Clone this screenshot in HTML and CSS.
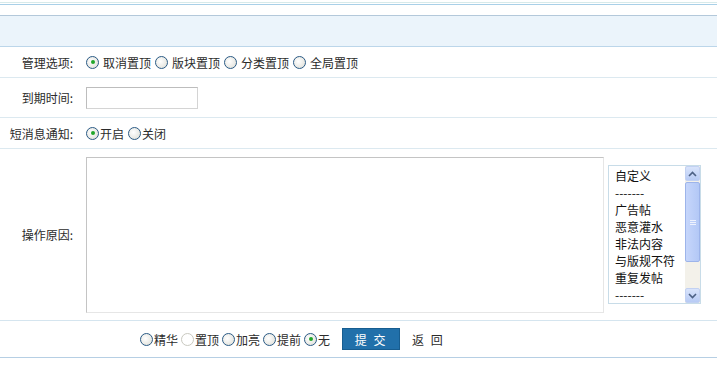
FILE: index.html
```html
<!DOCTYPE html>
<html lang="zh-CN">
<head>
    <meta charset="UTF-8" />
    <title>管理选项</title>
    <link rel="stylesheet" href="styles.css">
</head>
<body>
    <div class="topbar"></div>
    <div class="header"></div>

    <div class="row r1">
        <div class="label">管理选项:</div>
        <div class="field">
            <span class="opt"><i class="radio on"></i>取消置顶</span>
            <span class="opt"><i class="radio"></i>版块置顶</span>
            <span class="opt"><i class="radio"></i>分类置顶</span>
            <span class="opt"><i class="radio"></i>全局置顶</span>
        </div>
    </div>

    <div class="row r2">
        <div class="label">到期时间:</div>
        <div class="field"><input class="txt" type="text"></div>
    </div>

    <div class="row r3">
        <div class="label">短消息通知:</div>
        <div class="field tight">
            <span class="opt"><i class="radio on"></i>开启</span>
            <span class="opt"><i class="radio"></i>关闭</span>
        </div>
    </div>

    <div class="row r4">
        <div class="label">操作原因:</div>
        <div class="field">
            <textarea class="reason"></textarea>
            <div class="listbox">
                <ul>
                    <li>自定义</li>
                    <li>-------</li>
                    <li>广告帖</li>
                    <li>恶意灌水</li>
                    <li>非法内容</li>
                    <li>与版规不符</li>
                    <li>重复发帖</li>
                    <li>-------</li>
                </ul>
                <div class="scroll">
                    <div class="sbtn up"><svg width="9" height="6" viewBox="0 0 9 6"><path d="M1 5 L4.5 1.5 L8 5" fill="none" stroke="#4d6185" stroke-width="1.6"/></svg></div>
                    <div class="thumb"><span></span><span></span><span></span></div>
                    <div class="track"></div>
                    <div class="sbtn down"><svg width="9" height="6" viewBox="0 0 9 6"><path d="M1 1 L4.5 4.5 L8 1" fill="none" stroke="#4d6185" stroke-width="1.6"/></svg></div>
                </div>
            </div>
        </div>
    </div>

    <div class="row r5">
        <div class="field tight">
            <span class="opt"><i class="radio"></i>精华</span>
            <span class="opt"><i class="radio off"></i>置顶</span>
            <span class="opt"><i class="radio"></i>加亮</span>
            <span class="opt"><i class="radio"></i>提前</span>
            <span class="opt"><i class="radio on"></i>无</span>
            <button class="submit">提 交</button>
            <span class="back">返 回</span>
        </div>
    </div>
</body>
</html>
```

FILE: styles.css
```css
html,
body {
    margin: 0;
    padding: 0;
    background: #fff;
    font-family: "Noto Sans CJK SC", "Liberation Sans", sans-serif;
    font-size: 12px;
    color: #2b2b2b;
}
.topbar {
    margin-top: 2px;
    height: 1px;
    border-top: 1px solid #d7eaea;
    border-bottom: 1px solid #a9d0e8;
}
.header {
    margin-top: 10px;
    height: 30px;
    background: #ebf4fb;
    border-top: 1px solid #b3c8da;
    border-bottom: 1px solid #bcd6ea;
}
.row {
    display: flex;
    align-items: center;
    border-bottom: 1px solid #dce9f0;
}
.r1 { height: 30px; }
.r2 { height: 39px; }
.r3 { height: 30px; }
.r4 { height: 171px; border-bottom-color: #d5e5ef; }
.r5 { height: 36px; border-bottom-color: #b6cfe4; }
.label {
    width: 73px;
    text-align: right;
    padding-right: 13px;
    white-space: nowrap;
}
.field {
    display: flex;
    align-items: center;
}
.opt {
    display: flex;
    align-items: center;
    margin-right: 4px;
    white-space: nowrap;
}
.opt .radio { margin-right: 4px; }
.tight .opt .radio { margin-right: 1px; }
.radio {
    display: inline-block;
    box-sizing: border-box;
    width: 13px;
    height: 13px;
    border-radius: 50%;
    border: 1px solid #2a5a85;
    background: radial-gradient(circle at 40% 40%, #fff, #dcdcd4);
    position: relative;
}
.radio.on::after {
    content: '';
    position: absolute;
    left: 3.5px;
    top: 3.5px;
    width: 4px;
    height: 4px;
    border-radius: 50%;
    background: #22a62a;
}
.radio.off {
    border-color: #c9c9c0;
    background: #fff;
}
.txt {
    box-sizing: border-box;
    width: 112px;
    height: 22px;
    margin: 0;
    border: 1px solid #d4d4d4;
    border-top-color: #bdbdbd;
    border-left-color: #bdbdbd;
}
.reason {
    box-sizing: border-box;
    width: 518px;
    height: 156px;
    margin: 0;
    border: 1px solid #c4c4c4;
    border-right-color: #e6e6e6;
    border-bottom-color: #e6e6e6;
    resize: none;
}
.listbox {
    box-sizing: border-box;
    width: 93px;
    height: 139px;
    margin-left: 4px;
    border: 1px solid #c8dce8;
    display: flex;
    background: #fff;
}
.listbox ul {
    flex: 1;
    margin: 0;
    padding: 1px 0 0 6px;
    list-style: none;
    overflow: hidden;
}
.listbox li {
    height: 17px;
    line-height: 17px;
    color: #111;
    white-space: nowrap;
}
.scroll {
    width: 15px;
    display: flex;
    flex-direction: column;
    background: #f3f1ea;
}
.sbtn {
    height: 15px;
    box-sizing: border-box;
    border: 1px solid #c2d1f2;
    border-radius: 2px;
    background: linear-gradient(#d9e4fb, #b8cbf5);
    display: flex;
    align-items: center;
    justify-content: center;
}
.thumb {
    height: 80px;
    margin-top: 1px;
    box-sizing: border-box;
    border: 1px solid #9db4ea;
    border-radius: 2px;
    background: linear-gradient(90deg, #c6d6fb, #b3c8f6);
    display: flex;
    flex-direction: column;
    align-items: center;
    justify-content: center;
    gap: 1px;
}
.thumb span {
    width: 6px;
    height: 1px;
    background: #eef2fd;
}
.track { flex: 1; }
.r5 .field { padding-left: 140px; }
.r5 .opt { margin-right: 3px; }
.r5 .opt:nth-child(5) { margin-right: 12px; }
.submit {
    width: 58px;
    height: 22px;
    margin: 0;
    padding: 0;
    border: 1px solid #175d90;
    background: #2170aa;
    color: #fff;
    font-family: inherit;
    font-size: 12px;
    letter-spacing: 2px;
}
.back {
    margin-left: 12px;
    letter-spacing: 2px;
}
```
